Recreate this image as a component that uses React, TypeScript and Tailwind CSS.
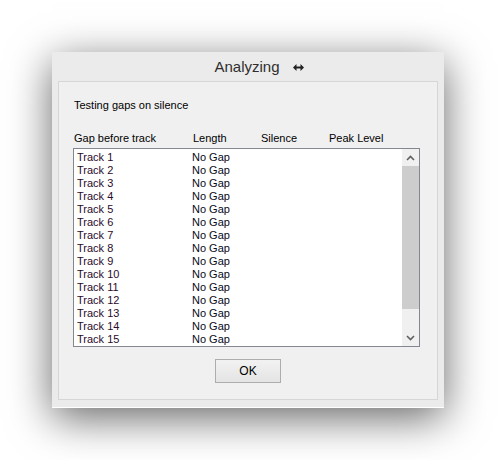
const tracks = Array.from({ length: 15 }, (_, i) => `Track ${i + 1}`)

const ui = { fontFamily: '"Liberation Sans", Arial, sans-serif' }

const ResizeArrow = () => (
    <svg width="11" height="7" viewBox="0 0 11 7" className="ml-[13px] mt-[2px]">
        <path d="M0 3.5 L3.5 0 L3.5 2.5 L7.5 2.5 L7.5 0 L11 3.5 L7.5 7 L7.5 4.5 L3.5 4.5 L3.5 7 Z" fill="#222" />
    </svg>
)

const Chevron = ({ up }: { up?: boolean }) => (
    <svg width="9" height="6" viewBox="0 0 9 6">
        <path
            d={up ? "M1 5 L4.5 1.5 L8 5" : "M1 1 L4.5 4.5 L8 1"}
            stroke="#606060"
            strokeWidth="1.6"
            fill="none"
        />
    </svg>
)

const ScrollBar = () => (
    <div className="flex flex-col w-[17px] bg-[#f0f0f0] shrink-0">
        <div className="h-[17px] flex items-center justify-center">
            <Chevron up />
        </div>
        <div className="h-[143px] bg-[#cdcdcd]" />
        <div className="flex-1" />
        <div className="h-[17px] flex items-center justify-center">
            <Chevron />
        </div>
    </div>
)

const App = () => {
    return (
        <main className="w-[497px] h-[460px] bg-white pt-[52px] pl-[52px]" style={ui}>
            <div className="w-[392px] h-[356px] bg-[#ebebeb] border-b border-white shadow-[0_10px_40px_rgba(0,0,0,0.6)] flex flex-col">
                <div className="h-[29px] flex items-center justify-center pl-[22px]">
                    <span className="text-[15px] text-[#2e2e2e] leading-none">Analyzing</span>
                    <ResizeArrow />
                </div>

                <div className="mx-[6px] h-[319px] border border-[#d6d6d6] bg-[#f0f0f0] px-[14px] flex flex-col text-[11px] text-black">
                    <p className="mt-[17px] ml-[1px] leading-[13px]">Testing gaps on silence</p>

                    <div className="mt-[20px] flex leading-[13px]">
                        <span className="w-[120px] pl-[1px]">Gap before track</span>
                        <span className="w-[68px]">Length</span>
                        <span className="w-[68px]">Silence</span>
                        <span>Peak Level</span>
                    </div>

                    <div className="mt-[3px] w-[347px] h-[199px] border border-[#828790] bg-white flex">
                        <ul className="flex-1 pt-[2px]">
                            {tracks.map((t) => (
                                <li key={t} className="flex h-[13px] leading-[13px]">
                                    <span className="w-[118px] pl-[3px] text-[#2b0a2b]">{t}</span>
                                    <span className="text-[#0a0a1a]">No Gap</span>
                                </li>
                            ))}
                        </ul>
                        <ScrollBar />
                    </div>

                    <div className="mt-[12px] flex justify-center">
                        <button className="w-[66px] h-[24px] border border-[#adadad] bg-gradient-to-b from-[#f2f2f2] to-[#e4e4e4] text-[12px] text-black">
                            OK
                        </button>
                    </div>
                </div>
            </div>
        </main>
    )
}

export default App
